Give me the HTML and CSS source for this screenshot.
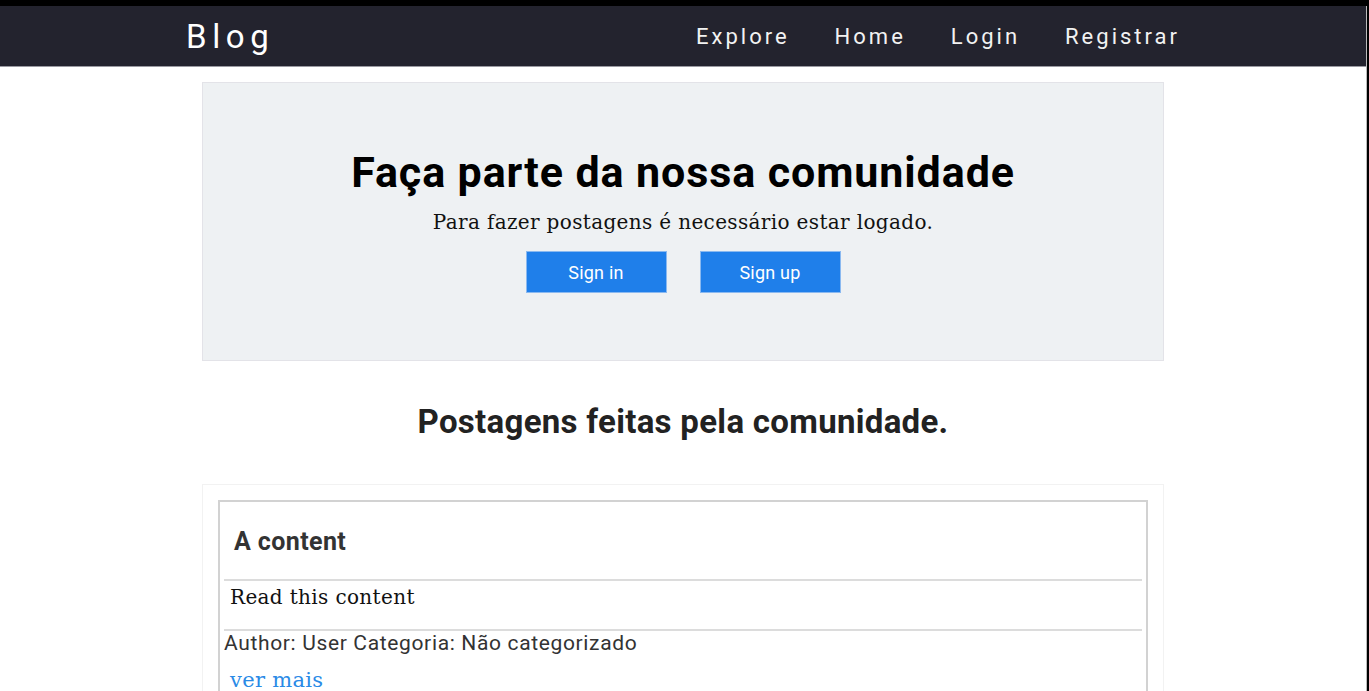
FILE: index.html
```html
<!DOCTYPE html>
<html lang="pt">
<head>
<meta charset="utf-8">
<title>Blog</title>
<link rel="stylesheet" href="styles.css">
</head>
<body>
<div class="frame">
  <header class="navbar">
    <div class="nav-inner">
      <a class="brand" href="#">Blog</a>
      <nav class="links">
        <a href="#">Explore</a>
        <a href="#">Home</a>
        <a href="#">Login</a>
        <a href="#">Registrar</a>
      </nav>
    </div>
  </header>
  <main class="container">
    <section class="hero">
      <h1>Faça parte da nossa comunidade</h1>
      <p class="lead">Para fazer postagens é necessário estar logado.</p>
      <div class="buttons">
        <a class="btn" href="#">Sign in</a>
        <a class="btn" href="#">Sign up</a>
      </div>
    </section>
    <h2 class="section-title">Postagens feitas pela comunidade.</h2>
    <section class="posts">
      <article class="post">
        <h3 class="post-title">A content</h3>
        <hr class="sep">
        <p class="post-body">Read this content</p>
        <hr class="sep">
        <p class="meta">Author: User Categoria: Não categorizado</p>
        <a class="more" href="#">ver mais</a>
      </article>
    </section>
  </main>
</div>
</body>
</html>
```
FILE: styles.css
```css
* { box-sizing: border-box; }
html, body { margin: 0; padding: 0; background: #000; }
body { height: 691px; overflow: hidden; }
.frame {
  background: #fff;
  margin-top: 6px;
  margin-right: 2px;
  height: 685px;
  overflow: hidden;
  border-right: 1px solid #bbb;
}
.navbar {
  background: #23232e;
  height: 61px;
  border-bottom: 1px solid #9a9aa2;
}
.nav-inner {
  display: flex;
  align-items: center;
  justify-content: space-between;
  height: 60px;
  padding: 0 186px 0 186px;
}
.brand {
  color: #fff;
  text-decoration: none;
  font-family: Roboto, sans-serif;
  font-size: 33px;
  letter-spacing: 5.6px;
}
.links { display: flex; gap: 45px; }
.links a {
  color: #f2f2f2;
  text-decoration: none;
  font-family: Roboto, sans-serif;
  font-size: 22px;
  letter-spacing: 3px;
}
.container {
  width: 962px;
  margin: 15px auto 0;
}
.hero {
  background: #eef1f3;
  border: 1px solid #e3e3e8;
  height: 279px;
  text-align: center;
  padding-top: 63px;
}
.hero h1 {
  margin: 0;
  font-family: Roboto, sans-serif;
  font-weight: 700;
  font-size: 43px;
  letter-spacing: 0.9px;
  line-height: 52px;
  color: #000;
}
.lead {
  margin: 10px 0 0;
  font-family: "DejaVu Serif", serif;
  font-size: 20px;
  letter-spacing: 0.35px;
  line-height: 28px;
  color: #111;
}
.buttons {
  display: flex;
  justify-content: center;
  gap: 33px;
  margin-top: 15px;
}
.btn {
  display: flex;
  align-items: center;
  justify-content: center;
  width: 141px;
  height: 42px;
  background: #1f7fea;
  border: 1px solid #8ab9f0;
  color: #fff;
  text-decoration: none;
  font-family: Roboto, sans-serif;
  font-size: 18px;
  letter-spacing: 0.2px;
}
.section-title {
  margin: 41px 0 0;
  text-align: center;
  font-family: Roboto, sans-serif;
  font-weight: 700;
  font-size: 33px;
  letter-spacing: 0.3px;
  line-height: 40px;
  color: #222;
}
.posts {
  margin-top: 42px;
  border: 1px solid #f2f2f2;
  padding: 15px 15px 0;
  height: 300px;
}
.post {
  border: 2px solid #d2d2d2;
  padding: 0 4px;
  height: 300px;
}
.post-title {
  margin: 0;
  padding: 25px 0 0 10px;
  font-family: Roboto, sans-serif;
  font-weight: 700;
  font-size: 25px;
  letter-spacing: 0.4px;
  line-height: 30px;
  color: #333;
  height: 77px;
}
.sep {
  margin: 0;
  border: 0;
  border-top: 2px solid #dcdcdc;
}
.post-body {
  margin: 0;
  padding: 1px 0 0 6px;
  height: 48px;
  font-family: "DejaVu Serif", serif;
  font-size: 20px;
  letter-spacing: 0.35px;
  line-height: 30px;
  color: #111;
}
.meta {
  margin: 0;
  padding-top: 0;
  font-family: Roboto, sans-serif;
  font-size: 21px;
  letter-spacing: 0.65px;
  line-height: 24px;
  color: #333;
}
.more {
  display: inline-block;
  margin: 13px 0 0 6px;
  font-family: "DejaVu Serif", serif;
  font-size: 21px;
  letter-spacing: 0.3px;
  color: #2a8ae6;
  text-decoration: none;
}
```
